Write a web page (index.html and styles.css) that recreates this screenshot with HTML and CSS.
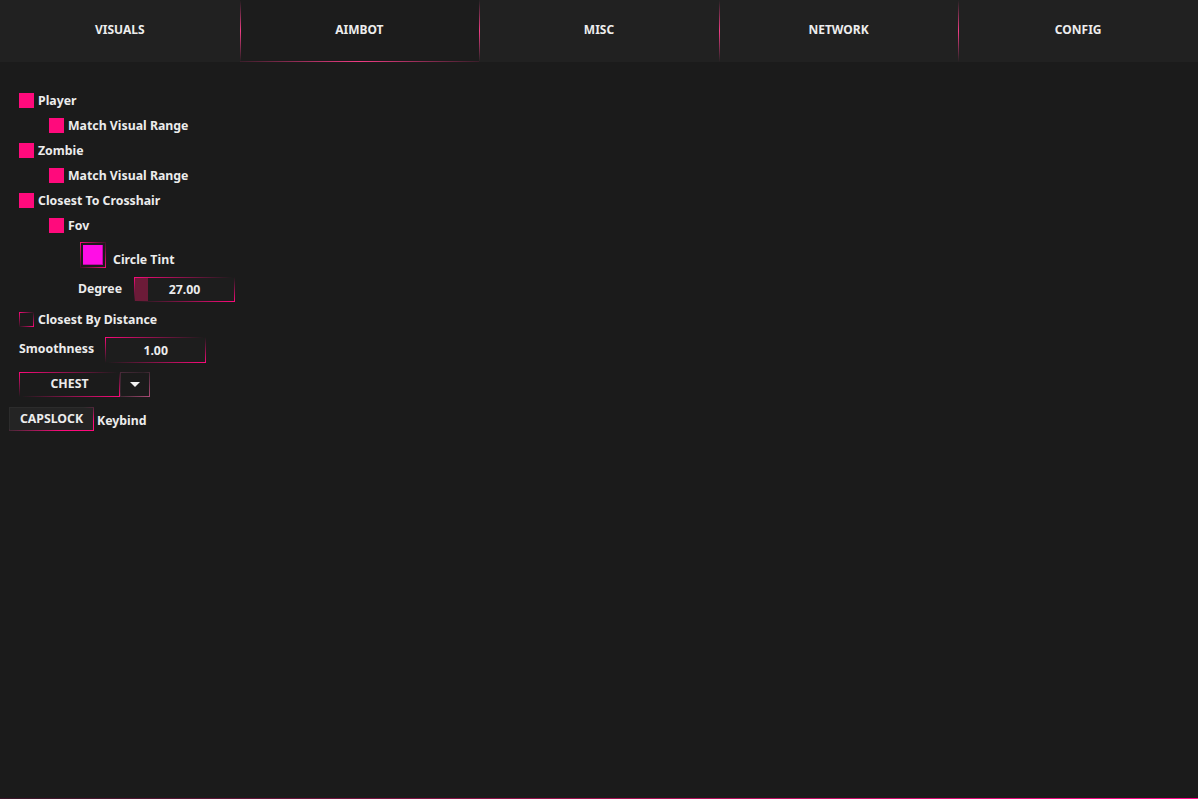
FILE: index.html
```html
<!DOCTYPE html>
<html>

<head>
    <meta charset="utf-8">
    <title>Menu</title>
    <link rel="stylesheet" href="styles.css">
</head>

<body>
    <div class="tabs">
        <div class="tab">VISUALS</div>
        <div class="tab active">AIMBOT</div>
        <div class="tab">MISC</div>
        <div class="tab">NETWORK</div>
        <div class="tab">CONFIG</div>
    </div>

    <div class="panel">
        <div class="row">
            <span class="check on"></span><span class="label">Player</span>
        </div>
        <div class="row sub">
            <span class="check on"></span><span class="label">Match Visual Range</span>
        </div>
        <div class="row">
            <span class="check on"></span><span class="label">Zombie</span>
        </div>
        <div class="row sub">
            <span class="check on"></span><span class="label">Match Visual Range</span>
        </div>
        <div class="row">
            <span class="check on"></span><span class="label">Closest To Crosshair</span>
        </div>
        <div class="row sub">
            <span class="check on"></span><span class="label">Fov</span>
        </div>
        <div class="row tint-row">
            <span class="swatch"><span class="swatch-fill"></span></span>
            <span class="label tint-label">Circle Tint</span>
        </div>
        <div class="row degree-row">
            <span class="label">Degree</span>
            <div class="field slider">
                <span class="slider-fill" style="width: 13px;"></span>
                <span class="field-value">27.00</span>
            </div>
        </div>
        <div class="row distance-row">
            <span class="check"></span><span class="label">Closest By Distance</span>
        </div>
        <div class="row smooth-row">
            <span class="label">Smoothness</span>
            <div class="field smooth">
                <span class="field-value">1.00</span>
            </div>
        </div>
        <div class="row combo-row">
            <div class="combo">CHEST</div>
            <div class="combo-btn">
                <svg width="12" height="7" viewBox="0 0 12 7"><path d="M1 1 L11 1 L6 6 Z" fill="#f2f2f2"/></svg>
            </div>
        </div>
        <div class="row key-row">
            <div class="keybtn">CAPSLOCK</div>
            <span class="label key-label">Keybind</span>
        </div>
    </div>

    <div class="footer-line"></div>
</body>

</html>
```

FILE: styles.css
```css
* {
    box-sizing: border-box;
}

html,
body {
    height: 100%;
}

body {
    margin: 0;
    background: #1b1b1b;
    color: #ececec;
    font-family: 'Noto Sans', 'DejaVu Sans', sans-serif;
    font-size: 12.3px;
    font-weight: 700;
    display: flex;
    flex-direction: column;
    overflow: hidden;
}

/* top tab strip */
.tabs {
    display: flex;
    height: 62px;
    background: #212121;
    flex-shrink: 0;
}

.tab {
    flex: 1;
    position: relative;
    display: flex;
    align-items: center;
    justify-content: center;
    padding-bottom: 4px;
    font-size: 12px;
    color: #ededed;
}

.tab + .tab::before {
    content: '';
    position: absolute;
    left: 0;
    top: 0;
    bottom: 0;
    width: 1px;
    background: linear-gradient(to bottom, rgba(230, 40, 120, 0) 0%, #f03e86 50%, rgba(230, 40, 120, 0) 100%);
}

.tab.active {
    background: #1c1c1c;
}

.tab.active::after {
    content: '';
    position: absolute;
    left: 0;
    right: 0;
    bottom: 0;
    height: 1px;
    background: linear-gradient(to right, rgba(230, 40, 120, 0.15) 0%, #f03c84 50%, rgba(230, 40, 120, 0.15) 100%);
}

/* options */
.panel {
    flex: 1;
    display: flex;
    flex-direction: column;
    padding: 26px 0 0 19px;
}

.row {
    display: flex;
    align-items: center;
    height: 25px;
    flex-shrink: 0;
}

.row.sub {
    padding-left: 30px;
}

.label {
    white-space: nowrap;
}

.check {
    width: 15px;
    height: 15px;
    margin-right: 4px;
    border: 1px solid;
    border-image: linear-gradient(to bottom right, #ff0a7c 0%, #2a1820 50%, #ff0a7c 100%) 1;
}

.check.on {
    background: #ff0a7c;
    border: none;
}

.tint-row {
    height: 34px;
    padding-left: 61px;
}

.swatch {
    width: 26px;
    height: 26px;
    padding: 2px;
    border: 1px solid;
    border-image: linear-gradient(to bottom right, #ff0a7c 0%, #3a1526 50%, #ff0a7c 100%) 1;
}

.swatch-fill {
    display: block;
    width: 100%;
    height: 100%;
    background: #ff0ee6;
    box-shadow: inset -1px -1px 0 #c00aa8;
}

.tint-label {
    margin-left: 7px;
    padding-top: 8px;
}

.field {
    position: relative;
    display: flex;
    align-items: center;
    justify-content: center;
    width: 101px;
    height: 25px;
    background: #1d1d1d;
    border: 1px solid;
    border-image: linear-gradient(to bottom right, #ff0a7c 0%, #1b1b1b 50%, #ff0a7c 100%) 1;
}

.field-value {
    position: relative;
}

.degree-row {
    margin-top: 5px;
    padding-left: 59px;
}

.degree-row .label {
    margin-top: -3px;
}

.slider {
    margin-left: 12px;
    justify-content: flex-start;
}

.slider-fill {
    position: absolute;
    left: 0;
    top: 0;
    bottom: 0;
    background: #6b1b38;
}

.slider .field-value {
    flex: 1;
    text-align: center;
}

.distance-row {
    margin-top: 5px;
}

.smooth-row {
    margin-top: 5px;
    height: 26px;
}

.smooth-row .label {
    margin-top: -3px;
}

.smooth {
    height: 26px;
    margin-left: 11px;
}

.combo-row {
    margin-top: 9px;
}

.combo {
    width: 101px;
    height: 25px;
    display: flex;
    align-items: center;
    justify-content: center;
    padding-bottom: 2px;
    border: 1px solid;
    border-image: linear-gradient(to bottom right, #ff0a7c 0%, #1b1b1b 50%, #ff0a7c 100%) 1;
}

.combo-btn {
    width: 30px;
    height: 25px;
    display: flex;
    align-items: center;
    justify-content: center;
    border: 1px solid;
    border-image: linear-gradient(to bottom right, #4a2a3a 0%, #2e2228 40%, #b04c78 100%) 1;
}

.key-row {
    margin-top: 10px;
    margin-left: -10px;
    height: 24px;
}

.keybtn {
    width: 85px;
    height: 24px;
    display: flex;
    align-items: center;
    justify-content: center;
    padding-bottom: 1px;
    background: #242424;
    border: 1px solid;
    border-image: linear-gradient(to bottom right, #2c2c2c 0%, #2c2c2c 45%, #ff0a7c 80%) 1;
}

.key-label {
    margin-left: 3px;
    padding-top: 3px;
}

.footer-line {
    height: 1px;
    flex-shrink: 0;
    background: linear-gradient(to right, #3a1528 0%, #a0104f 50%, #ff0a8c 100%);
}
```
